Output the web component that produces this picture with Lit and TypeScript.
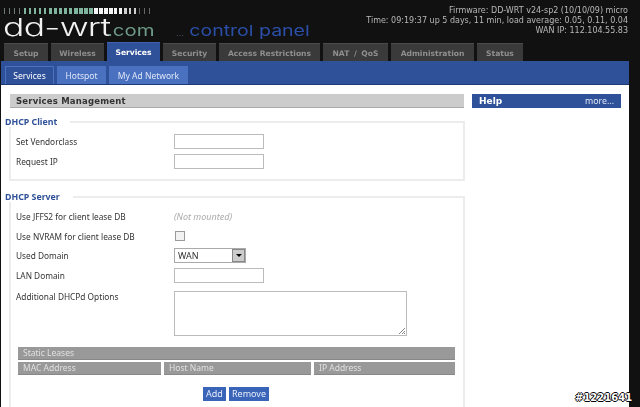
import { LitElement, html, css } from "lit";
import { customElement } from "lit/decorators.js";

const TABS: [string, number][] = [["Setup", 44], ["Wireless", 53], ["Services", 53], ["Security", 53], ["Access Restrictions", 101], ["NAT / QoS", 65], ["Administration", 83], ["Status", 46]];
const SUBS: [string, number][] = [["Services", 49], ["Hotspot", 49], ["My Ad Network", 79]];

const tick = (i: number) => {
  const color = i < 4 ? "#6f7a76" : i < 18 ? "#7fb59f" : i < 24 ? "#f4f4f4" : i < 27 ? "#cfcfcf" : "#666";
  const width = i < 4 ? 1 : i < 9 ? 2 : i < 14 ? 3 : i < 22 ? 4 : i < 25 ? 3 : i < 27 ? 2 : 1;
  return `background:${color};width:${width}px`;
};

@customElement("app-root")
export class AppRoot extends LitElement {
  static styles = css`
    :host { display: block; width: 640px; height: 407px; overflow: hidden; position: relative; background: #111; font-family: "Noto Sans", sans-serif; font-size: 8.3px; color: #333; }
    .blur { filter: blur(0.3px); }
    .header { height: 42px; display: flex; justify-content: space-between; padding: 0 12px 0 3px; box-sizing: border-box; }
    .brand { display: flex; flex-direction: column; padding-top: 8px; }
    .ticks { display: flex; height: 6px; padding-left: 1px; }
    .ticks span { width: 5px; display: flex; }
    .ticks i { display: block; height: 6px; }
    .logo { display: flex; align-items: baseline; margin-top: 1px; font-family: Inter, sans-serif; font-weight: 300; line-height: 25px; white-space: nowrap; }
    .word { display: block; transform-origin: left; }
    .dd { color: #f2f2f2; width: 104px; flex: none; font-size: 24px; letter-spacing: -0.5px; transform: scaleX(1.48); }
    .com { color: #6f9a88; width: 69px; flex: none; font-size: 16px; font-weight: 400; transform: scaleX(1.27); }
    .cp { color: #2b4fa8; font-size: 15px; font-weight: 400; transform: scaleX(1.3); }
    .cp span { color: #5a6070; font-size: 7px; }
    .fw { text-align: right; color: #b8b8b8; font-family: "DejaVu Sans", sans-serif; font-size: 8px; line-height: 10px; padding-top: 6px; white-space: nowrap; }
    .tabs { display: flex; gap: 3px; height: 19px; padding-left: 4px; font-family: "DejaVu Sans", sans-serif; font-size: 7.6px; }
    .tab { background: #3a3a3a; color: #8f8f8f; font-weight: bold; line-height: 19px; height: 18px; margin-top: 1px; text-align: center; white-space: nowrap; border-top: 1px solid #4a4a4a; box-sizing: border-box; }
    .tab.wide { word-spacing: 2px; }
    .tab.on { background: #2f5199; color: #fff; height: 19px; margin-top: 0; line-height: 20px; border-top-color: #3f63b0; }
    .band { margin: 0 11px 0 1px; height: 24px; background: #2f5199; display: flex; gap: 3px; padding: 5px 0 0 4px; box-sizing: border-box; border-bottom: 1px solid #1d3a75; font-size: 8.5px; }
    .sub { background: #4a70c0; color: #dfe7f7; line-height: 19px; text-align: center; white-space: nowrap; height: 18px; }
    .sub.on { background: #2f5199; color: #fff; border: 1px solid #4a70c0; border-bottom: 0; line-height: 17px; box-sizing: border-box; }
    .main { margin: 0 11px 0 1px; height: 322px; background: #fff; display: flex; gap: 8px; padding: 9px 8px 0 9px; box-sizing: border-box; }
    .left { width: 454px; flex: none; }
    .title { height: 14px; line-height: 14px; background: #ccc; border-bottom: 1px solid #aaa; box-sizing: border-box; padding-left: 6px; font-weight: bold; color: #333; font-family: "DejaVu Sans", sans-serif; font-size: 8.5px; letter-spacing: 0.2px; }
    .help { flex: 1; height: 14px; background: #2f5199; color: #fff; display: flex; justify-content: space-between; line-height: 14px; padding: 0 7px; box-sizing: border-box; font-size: 8.8px; }
    .help b { font-family: "DejaVu Sans", sans-serif; font-size: 9px; }
    .help span { color: #dfe7f7; }
    fieldset { margin: 0 0 0 -1px; padding: 0 0 0 5px; border: 2px solid #ececec; box-sizing: border-box; width: 456px; }
    fieldset.a { height: 64px; margin-top: 9px; }
    fieldset.b { height: 220px; margin-top: 11px; }
    legend { color: #2f5199; font-weight: bold; margin-left: -11px; padding: 0 13px 0 0; line-height: 10px; font-size: 8.8px; }
    .row { display: flex; align-items: center; height: 19.7px; }
    .row label { width: 158px; flex: none; }
    .a .row:first-of-type { margin-top: 4px; }
    .a .row { height: 20px; }
    .b .row:first-of-type { margin-top: 4.5px; }
    .input { width: 90px; height: 15px; border: 1px solid #bbb; box-sizing: border-box; background: #fff; }
    .muted { color: #aaa; font-style: italic; font-size: 9px; }
    .check { width: 10px; height: 10px; border: 1px solid #999; background: #f2f2f2; margin-left: 1px; box-sizing: border-box; }
    .select { width: 72px; height: 15px; border: 1px solid #aaa; box-sizing: border-box; display: flex; justify-content: space-between; align-items: center; padding-left: 3px; font-size: 9px; }
    .arrow { width: 13px; height: 13px; background: #ccc; border: 1px solid #888; box-sizing: border-box; display: flex; align-items: center; justify-content: center; }
    .arrow::after { content: ""; border: 3px solid transparent; border-top: 3px solid #000; border-bottom: 0; }
    .row.tall { align-items: flex-start; height: 45px; margin-top: 5.5px; }
    .area { width: 233px; height: 45px; border: 1px solid #bbb; box-sizing: border-box; position: relative; }
    .area svg { position: absolute; right: 0; bottom: 0; }
    .table { margin: 11px 0 0 2px; width: 437px; display: grid; grid-template-columns: 143px 147px 1fr; column-gap: 3px; row-gap: 2px; color: #e0e0e0; font-size: 8.5px; }
    .table div { background: #999; height: 13px; line-height: 12px; padding-left: 5px; border-bottom: 1px solid #888; box-sizing: border-box; }
    .table .full { grid-column: 1 / -1; }
    .btns { display: flex; gap: 3px; margin: 12px 0 0 187px; }
    .btn { background: #3a64b8; color: #e8eefa; height: 14px; line-height: 14px; padding: 0 3px; min-width: 17px; text-align: center; font-size: 9px; }
    .wm { position: absolute; left: 575px; top: 392px; color: #fff; font: bold 10px "DejaVu Sans", sans-serif; text-shadow: 1px 0 #000, -1px 0 #000, 0 1px #000, 0 -1px #000; }
  `;

  render() {
    return html`
      <div class="blur">
        <div class="header">
          <div class="brand">
            <div class="ticks">${Array.from({ length: 30 }, (_, i) => html`<span><i style="${tick(i)}"></i></span>`)}</div>
            <div class="logo"><span class="word dd">dd-wrt</span><span class="word com">.com</span><span class="word cp"><span>...</span> control panel</span></div>
          </div>
          <div class="fw">Firmware: DD-WRT v24-sp2 (10/10/09) micro<br />Time: 09:19:37 up 5 days, 11 min, load average: 0.05, 0.11, 0.04<br />WAN IP: 112.104.55.83</div>
        </div>
        <div class="tabs">${TABS.map(([t, w]) => html`<div class="tab ${t === "Services" ? "on" : ""} ${t.startsWith("NAT") ? "wide" : ""}" style="width:${w}px">${t}</div>`)}</div>
        <div class="band">${SUBS.map(([t, w], i) => html`<div class="sub ${i === 0 ? "on" : ""}" style="width:${w}px">${t}</div>`)}</div>
        <div class="main">
          <div class="left">
            <div class="title">Services Management</div>
            <fieldset class="a">
              <legend>DHCP Client</legend>
              <div class="row"><label>Set Vendorclass</label><div class="input"></div></div>
              <div class="row"><label>Request IP</label><div class="input"></div></div>
            </fieldset>
            <fieldset class="b">
              <legend>DHCP Server</legend>
              <div class="row"><label>Use JFFS2 for client lease DB</label><span class="muted">(Not mounted)</span></div>
              <div class="row"><label>Use NVRAM for client lease DB</label><div class="check"></div></div>
              <div class="row"><label>Used Domain</label><div class="select">WAN<div class="arrow"></div></div></div>
              <div class="row"><label>LAN Domain</label><div class="input"></div></div>
              <div class="row tall"><label>Additional DHCPd Options</label>
                <div class="area"><svg width="8" height="8" viewBox="0 0 8 8"><path d="M7 1L1 7M7 4L4 7M7 6L6 7" stroke="#888" fill="none"/></svg></div>
              </div>
              <div class="table">
                <div class="full">Static Leases</div>
                <div>MAC Address</div><div>Host Name</div><div>IP Address</div>
              </div>
              <div class="btns"><div class="btn">Add</div><div class="btn">Remove</div></div>
            </fieldset>
          </div>
          <div class="help"><b>Help</b><span>more...</span></div>
        </div>
      </div>
      <div class="wm">#1221641</div>
    `;
  }
}
